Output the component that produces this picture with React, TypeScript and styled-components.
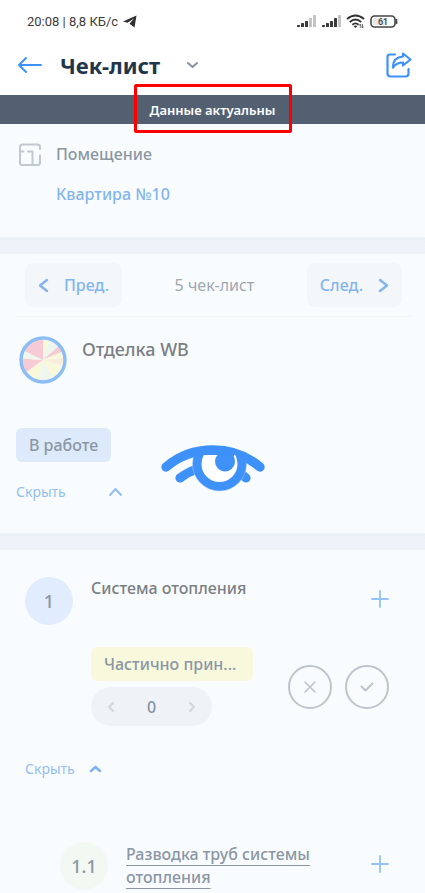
import React from "react";
import styled, { createGlobalStyle } from "styled-components";

const GlobalStyle = createGlobalStyle`
  *, *::before, *::after { box-sizing: border-box; }
  body { margin: 0; background: #f9fcff; font-family: "Noto Sans", "Open Sans", sans-serif; }
  h1, h2, h3, p { margin: 0; }
  button { font: inherit; color: inherit; border: 0; padding: 0; background: none; cursor: pointer; }
  svg { display: block; flex: none; }
`;

const Page = styled.div`
  position: relative;
  width: 100%;
`;

const StatusBar = styled.div`
  display: flex;
  align-items: center;
  justify-content: space-between;
  height: 43px;
  padding: 0 27px;
  background: #fff;
  color: #3c3c3c;
  font: 13px/20px Roboto, sans-serif;
`;

const StatusGroup = styled.div`
  display: flex;
  align-items: center;
  gap: 5px;
`;

const Header = styled.header`
  display: flex;
  align-items: center;
  height: 52px;
  padding: 0 13px 8px 17px;
  background: #fff;
`;

const Title = styled.h1`
  margin: 0 26px 0 17px;
  color: #22364b;
  font-size: 22px;
  line-height: 32px;
  font-weight: 700;
`;

const HeaderSpace = styled.div`
  flex: 1;
`;

const Banner = styled.div`
  position: relative;
  display: flex;
  align-items: center;
  justify-content: center;
  height: 29px;
  background: #536072;
  color: #fff;
  font-size: 13px;
  line-height: 18px;
  font-weight: 600;
`;

const Highlight = styled.div`
  position: absolute;
  top: -11px;
  left: 50%;
  width: 158px;
  height: 49px;
  transform: translateX(-50%);
  border: 3px solid #fe0000;
  border-radius: 2px;
`;

const Card = styled.section`
  background: #f9fcff;
`;

const Divider = styled.div`
  height: 17px;
  background: linear-gradient(#ebf0f6, #eff4fb);
`;

const Room = styled(Card)`
  display: flex;
  gap: 14px;
  padding: 19px 18px 32px;
`;

const RoomText = styled.div`
  display: flex;
  flex-direction: column;
  align-items: flex-start;
  gap: 18px;
  color: #8b96a2;
  font-size: 16px;
  line-height: 22px;
  font-weight: 500;
`;

const RoomLink = styled.a`
  color: #84b5ee;
  text-decoration: none;
`;

const Summary = styled(Card)`
  padding: 9px 16px 31px;
`;

const Pager = styled.nav`
  display: flex;
  align-items: center;
  justify-content: space-between;
  margin: 0 -2px 0 0;
  padding: 0 9px 9px;
  border-bottom: 1px solid #f0f4f7;
  color: #a0a8b0;
  font-size: 16px;
  line-height: 22px;
`;

const PagerButton = styled.button`
  display: flex;
  align-items: center;
  gap: 15px;
  height: 44px;
  padding: 0 13px;
  border-radius: 8px;
  background: #f3f7fa;
  color: #84b5ee;
  font-weight: 500;
`;

const Heading = styled.div`
  display: flex;
  gap: 15px;
  padding: 19px 0 0 3px;
`;

const ListTitle = styled.h2`
  color: #7b7f84;
  font-size: 18px;
  line-height: 26px;
  font-weight: 500;
`;

const StatusTag = styled.div<{ $tone: "blue" | "yellow" }>`
  width: fit-content;
  min-width: ${(p) => (p.$tone === "yellow" ? 162 : 0)}px;
  height: 34px;
  padding: 0 13px;
  border-radius: 6px;
  background: ${(p) => (p.$tone === "blue" ? "#dceafb" : "#f8f8dd")};
  color: #8b96a5;
  font-size: 16px;
  line-height: 34px;
  font-weight: 500;
`;

const SummaryTag = styled.div`
  padding-top: 44px;
`;

const Toggle = styled.button<{ $gap: number }>`
  display: flex;
  align-items: center;
  gap: ${(p) => p.$gap}px;
  color: #94bfee;
  font-size: 14px;
  line-height: 20px;
`;

const SummaryToggle = styled.div`
  padding-top: 20px;
`;

const Items = styled(Card)`
  padding: 27px 36px 2px 25px;
`;

const Row = styled.div<{ $indent?: number }>`
  display: flex;
  align-items: flex-start;
  gap: 18px;
  padding-left: ${(p) => p.$indent ?? 0}px;
`;

const Number = styled.div<{ $tone: "blue" | "green" }>`
  flex: none;
  width: 48px;
  height: 48px;
  border-radius: 50%;
  background: ${(p) => (p.$tone === "blue" ? "#e1edfe" : "#f2f8f2")};
  color: #8b96a2;
  font-size: 18px;
  line-height: 48px;
  font-weight: 500;
  text-align: center;
`;

const ItemTitle = styled.h3`
  flex: 1;
  color: #7b7f84;
  font-size: 16px;
  line-height: 23px;
  font-weight: 500;
`;

const SubTitle = styled.div`
  flex: 1;
  padding-top: 1px;
  font-size: 16px;
  line-height: 23px;
  font-weight: 500;
`;

const SubLink = styled.a`
  color: #8b96a5;
  text-decoration: underline;
  text-decoration-thickness: 1px;
  text-underline-offset: 5px;
  text-decoration-skip-ink: none;
`;

const AddButton = styled.button`
  margin-top: 13px;
`;

const Controls = styled.div`
  display: flex;
  align-items: center;
  justify-content: space-between;
  padding: 22px 0 0 66px;
`;

const Stack = styled.div`
  display: flex;
  flex-direction: column;
  gap: 6px;
`;

const Stepper = styled.div`
  display: flex;
  align-items: center;
  justify-content: space-between;
  width: 121px;
  height: 39px;
  padding: 0 16px;
  border-radius: 20px;
  background: #eff3f8;
  color: #8593a3;
  font-size: 16px;
  line-height: 24px;
  font-weight: 500;
`;

const Actions = styled.div`
  display: flex;
  gap: 13px;
`;

const RoundButton = styled.button`
  display: flex;
  align-items: center;
  justify-content: center;
  width: 44px;
  height: 44px;
  border: 2px solid #bcc4ce;
  border-radius: 50%;
`;

const ItemToggle = styled.div`
  padding: 33px 0 63px;
`;

const Loader = styled.div`
  position: absolute;
  top: 444px;
  left: 0;
  right: 0;
  display: flex;
  justify-content: center;
  pointer-events: none;
`;

type Dir = "left" | "right" | "up" | "down";

const CHEVRONS: Record<Dir, (w: number, h: number) => string> = {
  left: (w, h) => `M${w - 2} 2L2 ${h / 2}L${w - 2} ${h - 2}`,
  right: (w, h) => `M2 2L${w - 2} ${h / 2}L2 ${h - 2}`,
  up: (w, h) => `M2 ${h - 2}L${w / 2} 2L${w - 2} ${h - 2}`,
  down: (w, h) => `M2 2L${w / 2} ${h - 2}L${w - 2} 2`,
};

function Chevron({ dir, w, h, color, stroke = 2 }: { dir: Dir; w: number; h: number; color: string; stroke?: number }) {
  return (
    <svg width={w} height={h} viewBox={`0 0 ${w} ${h}`} fill="none" aria-hidden="true">
      <path d={CHEVRONS[dir](w, h)} stroke={color} strokeWidth={stroke} strokeLinecap="round" strokeLinejoin="round" />
    </svg>
  );
}

function Signal({ active }: { active: number }) {
  return (
    <svg width="20" height="13" viewBox="0 0 20 13" aria-hidden="true">
      {[2, 4, 6, 9, 12].map((h, i) => (
        <rect key={h} x={i * 4 + 1} y={12 - h} width="3" height={h} rx="0.5" fill={i < active ? "#3a3a3a" : "#c3c3c3"} />
      ))}
    </svg>
  );
}

function Wifi() {
  return (
    <svg width="19" height="15" viewBox="0 0 19 15" fill="none" aria-hidden="true">
      <g stroke="#333" strokeWidth="1.8">
        <path d="M1 5Q9.500-2 18 5" />
        <path d="M3.800 8Q9.500 3 15.200 8" />
        <path d="M6.300 10.700Q9.500 8 12.700 10.700" />
      </g>
      <path d="M7.500 12Q9.500 10.800 11.500 12L9.500 14Z" fill="#333" />
      <path d="M14.300 14V10.500M16.500 10V13.500M13.300 11.500L14.300 10L15.300 11.500M15.500 12.500L16.500 14L17.500 12.500" stroke="#555" strokeWidth=".8" />
    </svg>
  );
}

const BatteryText = styled.text`
  font: 500 9px Roboto, sans-serif;
  fill: #3a3a3a;
`;

function Battery() {
  return (
    <svg width="28" height="13" viewBox="0 0 28 13" fill="none" aria-hidden="true">
      <rect x="1" y="1" width="24" height="11" rx="3.500" stroke="#444" strokeWidth="1.600" />
      <rect x="3" y="3" width="13" height="7" rx="1.500" fill="#e6e6e6" />
      <path d="M26.500 4.500V8.500" stroke="#444" strokeWidth="1.600" strokeLinecap="round" />
      <BatteryText x="13" y="9.700" textAnchor="middle">61</BatteryText>
    </svg>
  );
}

function Wheel() {
  const colors: [number, number, string][] = [
    [0, 18, "#f8f8db"], [18, 48, "#eef6ed"], [48, 67, "#f7cbd3"], [67, 84, "#f8f8db"], [84, 106, "#faecdb"],
    [106, 151, "#f8f8db"], [151, 191, "#eef6ed"], [191, 234, "#f8f8db"], [234, 274, "#f7cbd3"],
    [274, 296, "#eef6ed"], [296, 360, "#f7cbd3"],
  ];
  const at = (a: number) => {
    const r = ((a - 90) * Math.PI) / 180;
    return `${(24 + 21 * Math.cos(r)).toFixed(2)} ${(24 + 21 * Math.sin(r)).toFixed(2)}`;
  };
  return (
    <svg width="48" height="48" viewBox="0 0 48 48" aria-hidden="true">
      {colors.map(([a, b, c]) => (
        <path key={a} d={`M24 24L${at(a)}A21 21 0 0 1 ${at(b)}Z`} fill={c} />
      ))}
      <circle cx="24" cy="24" r="22" fill="none" stroke="#8bbdf8" strokeWidth="3.400" />
    </svg>
  );
}

function Plus() {
  return (
    <svg width="18" height="18" viewBox="0 0 18 18" aria-hidden="true">
      <path d="M9 1V17M1 9H17" stroke="#94c3fb" strokeWidth="1.800" strokeLinecap="round" />
    </svg>
  );
}

function Eye() {
  return (
    <svg width="106" height="48" viewBox="0 0 106 48" fill="none" role="img" aria-label="Загрузка">
      <defs>
        <clipPath id="iris">
          <rect x="28" y="8" width="64" height="40" />
        </clipPath>
        <clipPath id="white">
          <rect x="28" y="11" width="64" height="37" />
        </clipPath>
      </defs>
      <path d="M20 34Q28 28 37 25M86 34Q83 31 79 29" stroke="#3f91fa" strokeWidth="9.200" strokeLinecap="round" />
      <g clipPath="url(#iris)">
        <circle cx="59.500" cy="20" r="27" fill="#3f91fa" stroke="#a9cffd" strokeWidth=".5" />
      </g>
      <path d="M6 23C20 11 36 6 53 6S86 11 100 23" stroke="#3f91fa" strokeWidth="9.400" strokeLinecap="round" />
      <g clipPath="url(#white)">
        <circle cx="59.500" cy="20" r="18" fill="#fff" />
      </g>
      <circle cx="65" cy="17.500" r="10" fill="#3f91fa" />
      <path d="M66 8H74V13Z" fill="#3f91fa" />
    </svg>
  );
}

export default function App() {
  return (
    <Page>
      <GlobalStyle />
      <StatusBar>
        <StatusGroup>
          <span>20:08 | 8,8 КБ/с</span>
          <svg width="14" height="13" viewBox="0 0 14 13" aria-hidden="true">
            <path d="M13.500.500L0 6.500L4.500 7.800L11 3.500L6.500 8.700L11.500 12.500Z" fill="#303030" />
          </svg>
        </StatusGroup>
        <StatusGroup>
          <Signal active={3} />
          <Signal active={4} />
          <Wifi />
          <Battery />
        </StatusGroup>
      </StatusBar>

      <Header>
        <button aria-label="Назад">
          <svg width="26" height="18" viewBox="0 0 26 18" fill="none" aria-hidden="true">
            <path d="M24 9H2M9 2L2 9L9 16" stroke="#3f91fa" strokeWidth="2" strokeLinecap="round" strokeLinejoin="round" />
          </svg>
        </button>
        <Title>Чек-лист</Title>
        <button aria-label="Выбрать раздел">
          <Chevron dir="down" w={13} h={8} color="#8793a2" />
        </button>
        <HeaderSpace />
        <button aria-label="Поделиться">
          <svg width="26" height="26" viewBox="0 0 26 26" fill="none" aria-hidden="true">
            <g stroke="#3f91fa" strokeWidth="2.200" strokeLinecap="round" strokeLinejoin="round">
              <path d="M9 2.500H4Q1.500 2.500 1.500 5V21.500Q1.500 24.500 4.500 24.500H19.500Q22.500 24.500 22.500 21.500V17" />
              <path d="M17 1.500L24.500 7.500L17 13.500V10.500Q10.500 10.500 7 15.500Q6.500 5.500 17 4.500Z" />
            </g>
          </svg>
        </button>
      </Header>

      <Banner role="status">
        Данные актуальны
        <Highlight />
      </Banner>

      <Room>
        <svg width="24" height="24" viewBox="0 0 24 24" fill="none" aria-hidden="true">
          <path
            d="M22 6V4Q22 1.500 19.500 1.500H4.500Q2 1.500 2 4V19.500Q2 22 4.500 22H19.500Q22 22 22 19.500V12.500M2 8.500H5.500M10 8.500H14.500V21.500"
            stroke="#c0c8d2"
            strokeWidth="2"
            strokeLinecap="round"
            strokeLinejoin="round"
          />
        </svg>
        <RoomText>
          <p>Помещение</p>
          <RoomLink href="#room">Квартира №10</RoomLink>
        </RoomText>
      </Room>
      <Divider />

      <Summary>
        <Pager>
          <PagerButton>
            <Chevron dir="left" w={11} h={15} color="#84b5ee" stroke={2.5} />
            Пред.
          </PagerButton>
          <span>5 чек-лист</span>
          <PagerButton>
            След.
            <Chevron dir="right" w={11} h={15} color="#84b5ee" stroke={2.5} />
          </PagerButton>
        </Pager>
        <Heading>
          <Wheel />
          <ListTitle>Отделка WB</ListTitle>
        </Heading>
        <SummaryTag>
          <StatusTag $tone="blue">В работе</StatusTag>
        </SummaryTag>
        <SummaryToggle>
          <Toggle $gap={42} aria-expanded="true">
            Скрыть
            <Chevron dir="up" w={15} h={10} color="#94bff5" />
          </Toggle>
        </SummaryToggle>
      </Summary>
      <Divider />

      <Items>
        <Row>
          <Number $tone="blue">1</Number>
          <ItemTitle>Система отопления</ItemTitle>
          <AddButton aria-label="Добавить к системе отопления">
            <Plus />
          </AddButton>
        </Row>
        <Controls>
          <Stack>
            <StatusTag $tone="yellow">Частично прин...</StatusTag>
            <Stepper>
              <button aria-label="Уменьшить">
                <Chevron dir="left" w={8} h={12} color="#cfd6de" />
              </button>
              <span>0</span>
              <button aria-label="Увеличить">
                <Chevron dir="right" w={8} h={12} color="#cfd6de" />
              </button>
            </Stepper>
          </Stack>
          <Actions>
            <RoundButton aria-label="Отклонить">
              <svg width="12" height="12" viewBox="0 0 12 12" aria-hidden="true">
                <path d="M1 1L11 11M11 1L1 11" stroke="#bcc4ce" strokeWidth="1.600" strokeLinecap="round" />
              </svg>
            </RoundButton>
            <RoundButton aria-label="Принять">
              <svg width="14" height="10" viewBox="0 0 14 10" fill="none" aria-hidden="true">
                <path d="M1.500 4.500L5.500 8.500L12.500 1.500" stroke="#bcc4ce" strokeWidth="2" strokeLinecap="round" strokeLinejoin="round" />
              </svg>
            </RoundButton>
          </Actions>
        </Controls>
        <ItemToggle>
          <Toggle $gap={14} aria-expanded="true">
            Скрыть
            <Chevron dir="up" w={13} h={8} color="#7fb2f2" stroke={2.5} />
          </Toggle>
        </ItemToggle>
        <Row $indent={35}>
          <Number $tone="green">1.1</Number>
          <SubTitle>
            <SubLink href="#item-1-1">Разводка труб системы отопления</SubLink>
          </SubTitle>
          <AddButton aria-label="Добавить к разводке труб">
            <Plus />
          </AddButton>
        </Row>
      </Items>

      <Loader>
        <Eye />
      </Loader>
    </Page>
  );
}
